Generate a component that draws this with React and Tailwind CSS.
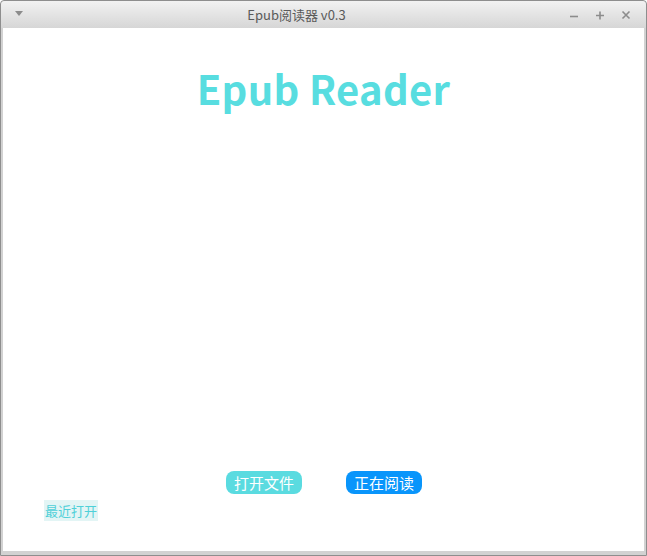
import React from 'react'

const FONT = { fontFamily: '"Noto Sans CJK SC", "Noto Sans", sans-serif' }

function TitleBar() {
  return (
    <div className="flex h-[27px] items-center rounded-t-[4px] bg-gradient-to-b from-[#f2f2f2] to-[#d6d6d6] px-3 text-[#5a5a5a]">
      {/* window menu arrow */}
      <svg width="10" height="8" viewBox="0 0 10 8" className="ml-[1px] mt-[-2px]">
        <path d="M1 1 L9 1 L5 6 Z" fill="#8c8c8c" />
      </svg>
      <div className="flex-1 text-center text-[13px]">Epub阅读器 v0.3</div>
      <div className="flex items-center gap-[16px] pr-[3px]">
        <svg width="10" height="10" viewBox="0 0 10 10"><path d="M1 6.5 H9" stroke="#8c8c8c" strokeWidth="1.6" /></svg>
        <svg width="10" height="10" viewBox="0 0 10 10"><path d="M1 5.5 H9 M5 1.5 V9.5" stroke="#8c8c8c" strokeWidth="1.6" /></svg>
        <svg width="10" height="10" viewBox="0 0 10 10"><path d="M1.5 1.5 L8.5 8.5 M8.5 1.5 L1.5 8.5" stroke="#8c8c8c" strokeWidth="1.6" /></svg>
      </div>
    </div>
  )
}

export default function App() {
  return (
    <div className="h-[556px] w-[647px] bg-white" style={FONT}>
      <div className="flex h-full flex-col rounded-t-[4px] border border-[#8e8e8e] bg-[#d2d2d2]">
        <TitleBar />
        <div className="mx-[2px] mb-[4px] flex flex-1 flex-col bg-white">
          <h1 className="mt-[30px] text-center text-[40px] font-bold leading-[60px] tracking-[0.3px] text-[#58dde0]">Epub Reader</h1>
          <div className="flex-1" />
          <div className="flex items-center justify-center gap-[44px] pl-[1px]">
            <button className="h-[23px] rounded-[8px] bg-[#5adbe0] px-[8px] text-[15px] leading-[23px] text-white">打开文件</button>
            <button className="h-[23px] rounded-[8px] bg-[#0995fb] px-[8px] text-[15px] leading-[23px] text-white">正在阅读</button>
          </div>
          <div className="mb-[30px] mt-[6px] flex pl-[41px]">
            <span className="h-[21px] bg-[#e3f5f5] px-[1px] text-[13px] leading-[21px] text-[#4fd0d8]">最近打开</span>
          </div>
        </div>
      </div>
    </div>
  )
}
